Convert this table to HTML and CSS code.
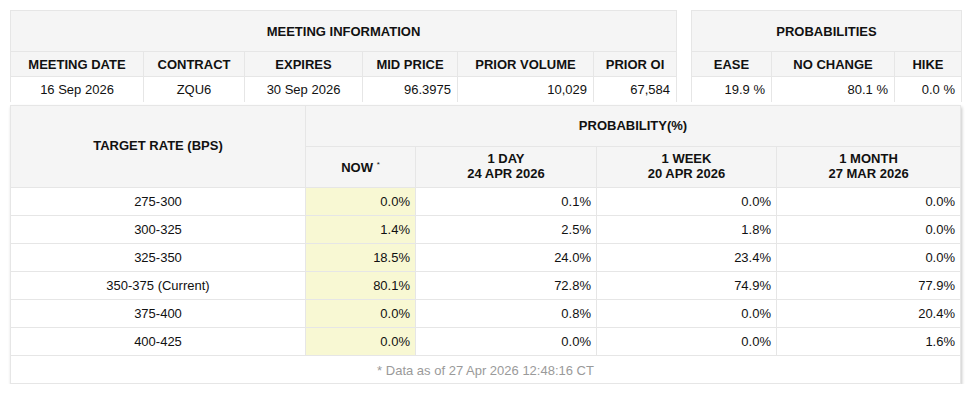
FILE: index.html
```html
<!DOCTYPE html>
<html>
<head>
<meta charset="utf-8">
<link rel="stylesheet" href="styles.css">
</head>
<body>
<div class="page">
  <div class="top-row">
    <table class="grid meeting">
      <colgroup>
        <col style="width:133px"><col style="width:101px"><col style="width:118px"><col style="width:95px"><col style="width:136px"><col style="width:83px">
      </colgroup>
      <tr class="title-row"><th colspan="6">MEETING INFORMATION</th></tr>
      <tr class="head-row">
        <th>MEETING DATE</th><th>CONTRACT</th><th>EXPIRES</th><th>MID PRICE</th><th>PRIOR VOLUME</th><th>PRIOR OI</th>
      </tr>
      <tr class="data-row">
        <td class="c">16 Sep 2026</td><td class="c">ZQU6</td><td class="c">30 Sep 2026</td><td class="r">96.3975</td><td class="r">10,029</td><td class="r">67,584</td>
      </tr>
    </table>
    <table class="grid probs">
      <colgroup>
        <col style="width:80px"><col style="width:123px"><col style="width:67px">
      </colgroup>
      <tr class="title-row"><th colspan="3">PROBABILITIES</th></tr>
      <tr class="head-row"><th>EASE</th><th>NO CHANGE</th><th>HIKE</th></tr>
      <tr class="data-row"><td class="r">19.9 %</td><td class="r">80.1 %</td><td class="r">0.0 %</td></tr>
    </table>
  </div>
  <table class="grid target">
    <colgroup>
      <col style="width:295px"><col style="width:110px"><col style="width:181px"><col style="width:180px"><col style="width:184px">
    </colgroup>
    <tr class="title-row">
      <th rowspan="2" class="rate-head">TARGET RATE (BPS)</th>
      <th colspan="4">PROBABILITY(%)</th>
    </tr>
    <tr class="sub-row">
      <th>NOW <sup>*</sup></th>
      <th>1 DAY<br>24 APR 2026</th>
      <th>1 WEEK<br>20 APR 2026</th>
      <th>1 MONTH<br>27 MAR 2026</th>
    </tr>
    <tr class="rate-row"><td class="c">275-300</td><td class="r now">0.0%</td><td class="r">0.1%</td><td class="r">0.0%</td><td class="r">0.0%</td></tr>
    <tr class="rate-row"><td class="c">300-325</td><td class="r now">1.4%</td><td class="r">2.5%</td><td class="r">1.8%</td><td class="r">0.0%</td></tr>
    <tr class="rate-row"><td class="c">325-350</td><td class="r now">18.5%</td><td class="r">24.0%</td><td class="r">23.4%</td><td class="r">0.0%</td></tr>
    <tr class="rate-row"><td class="c">350-375 (Current)</td><td class="r now">80.1%</td><td class="r">72.8%</td><td class="r">74.9%</td><td class="r">77.9%</td></tr>
    <tr class="rate-row"><td class="c">375-400</td><td class="r now">0.0%</td><td class="r">0.8%</td><td class="r">0.0%</td><td class="r">20.4%</td></tr>
    <tr class="rate-row"><td class="c">400-425</td><td class="r now">0.0%</td><td class="r">0.0%</td><td class="r">0.0%</td><td class="r">1.6%</td></tr>
    <tr class="foot-row"><td colspan="5">* Data as of 27 Apr 2026 12:48:16 CT</td></tr>
  </table>
</div>
</body>
</html>
```

FILE: styles.css
```css
html, body {
  margin: 0;
  padding: 0;
  background: #ffffff;
}

.page {
  padding: 10px 0 0 10px;
  width: 950px;
  font-family: "Liberation Sans", Arial, sans-serif;
  font-size: 13px;
  color: #111;
}

.top-row {
  display: flex;
  gap: 14px;
  align-items: flex-start;
}

.grid {
  border-collapse: collapse;
  table-layout: fixed;
}

.grid th,
.grid td {
  border: 1px solid #e6e6e6;
  padding: 0 6px;
  box-sizing: border-box;
  white-space: nowrap;
}

.grid th {
  background: #f5f5f5;
  font-weight: bold;
  text-align: center;
  color: #111;
}

.meeting { width: 666px; }
.probs { width: 270px; }

.title-row th { height: 41px; }
.head-row th { height: 25px; }
.data-row td { height: 25px; border-bottom: none; background: #fff; }

.c { text-align: center; }
.r { text-align: right; }

.target {
  width: 950px;
  margin-top: 3px;
  box-shadow: 1px 2px 3px rgba(0, 0, 0, 0.22);
}

.target .title-row th { height: 41px; }

.target .sub-row th {
  height: 41px;
  line-height: 15px;
  padding-bottom: 2px;
}

.target .rate-head {
  padding-bottom: 2px;
}

.target sup {
  font-size: 8px;
  vertical-align: 5px;
  font-weight: normal;
}

.rate-row td {
  height: 28px;
  padding: 0 5px;
}

.now {
  background: #f8f8d3;
}

.foot-row td {
  height: 28px;
  padding-top: 3px;
  text-align: center;
  color: #9a9a9a;
}
```
